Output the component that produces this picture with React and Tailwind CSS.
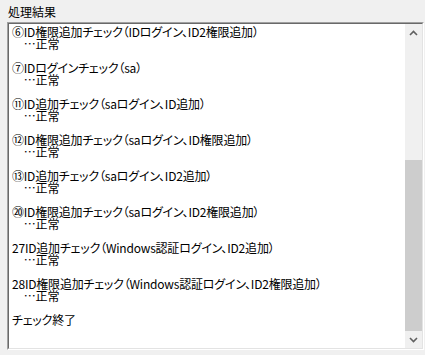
import React from "react";

const lines = [
  "⑥ID権限追加チェック（IDログイン、ID2権限追加）",
  "　…正常",
  "",
  "⑦IDログインチェック（sa）",
  "　…正常",
  "",
  "⑪ID追加チェック（saログイン、ID追加）",
  "　…正常",
  "",
  "⑫ID権限追加チェック（saログイン、ID権限追加）",
  "　…正常",
  "",
  "⑬ID追加チェック（saログイン、ID2追加）",
  "　…正常",
  "",
  "⑳ID権限追加チェック（saログイン、ID2権限追加）",
  "　…正常",
  "",
  "27ID追加チェック（Windows認証ログイン、ID2追加）",
  "　…正常",
  "",
  "28ID権限追加チェック（Windows認証ログイン、ID2権限追加）",
  "　…正常",
  "",
  "チェック終了",
];

function Chevron({ up }) {
  return (
    <svg width="9" height="6" viewBox="0 0 9 6" className="block">
      <path
        d={up ? "M1 5 L4.5 1.5 L8 5" : "M1 1 L4.5 4.5 L8 1"}
        fill="none"
        stroke="#606060"
        strokeWidth="1.6"
      />
    </svg>
  );
}

export default function App() {
  return (
    <div
      className="w-[425px] h-[355px] bg-[#f0f0f0] overflow-hidden text-black"
      style={{ fontFamily: '"Noto Sans CJK JP", "Noto Sans", sans-serif' }}
    >
      <div className="pl-[8px] pt-[6px] text-[12px] leading-[12px] h-[22px] [font-feature-settings:'palt']">
        処理結果
      </div>
      <div className="ml-[7px] w-[417px] h-[328px] border border-t-[#a0a0a0] border-l-[#a0a0a0] border-b-white border-r-white">
        <div className="w-full h-full border border-t-[#696969] border-l-[#696969] border-b-[#e3e3e3] border-r-[#e3e3e3] flex bg-white">
          <div className="flex-1 pl-[3px] pt-[2px] text-[12px] leading-[12px] tracking-[-0.2px] [font-feature-settings:'palt'] overflow-hidden">
            {lines.map((l, i) => (
              <div key={i} className="h-[12px] whitespace-pre">
                {l}
              </div>
            ))}
          </div>
          <div className="w-[17px] h-full bg-[#f0f0f0] flex flex-col">
            <div className="h-[17px] flex items-center justify-center">
              <Chevron up />
            </div>
            <div className="h-[119px]" />
            <div className="h-[171px] bg-[#cdcdcd]" />
            <div className="flex-1 flex items-center justify-center">
              <Chevron />
            </div>
          </div>
        </div>
      </div>
    </div>
  );
}
